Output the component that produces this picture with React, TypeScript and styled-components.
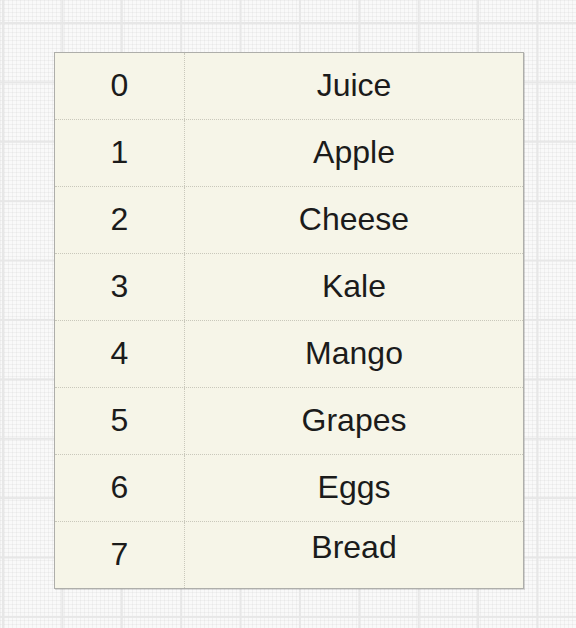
import React from "react";
import styled, { createGlobalStyle } from "styled-components";

const GlobalStyle = createGlobalStyle`
  html, body {
    margin: 0;
    padding: 0;
  }
  body {
    font-family: "Liberation Sans", Arial, sans-serif;
  }
`;

const Canvas = styled.div`
  width: 576px;
  height: 628px;
  box-sizing: border-box;
  padding: 52px 0 0 54px;
  background-color: #f9f9f9;
  background-image:
    linear-gradient(to right, #e7e7e7 0 2px, transparent 2px),
    linear-gradient(to bottom, #e7e7e7 0 2px, transparent 2px),
    linear-gradient(to right, rgba(0, 0, 0, 0.035) 0 1px, transparent 1px),
    linear-gradient(to bottom, rgba(0, 0, 0, 0.035) 0 1px, transparent 1px);
  background-size: 59.4px 59.4px, 59.4px 59.4px, 4px 4px, 4px 4px;
  background-position: 2px 22px, 2px 22px, 0 0, 0 0;
  overflow: hidden;
`;

const Table = styled.div`
  width: 470px;
  box-sizing: border-box;
  border: 1px solid #aeaeaa;
  box-shadow: 1px 1px 0 rgba(0, 0, 0, 0.12);
  background: #f6f5e8;
  display: flex;
  flex-direction: column;
`;

const Row = styled.div<{ $last?: boolean }>`
  display: grid;
  grid-template-columns: 130px 1fr;
  height: ${(p) => (p.$last ? "66px" : "67px")};
  box-sizing: border-box;
  border-bottom: ${(p) => (p.$last ? "none" : "1px dotted #c9c8bb")};
`;

const Cell = styled.div<{ $divider?: boolean; $lift?: number }>`
  display: flex;
  align-items: center;
  justify-content: center;
  box-sizing: border-box;
  border-right: ${(p) => (p.$divider ? "1px dotted #c9c8bb" : "none")};
  padding-bottom: ${(p) => (p.$lift ? `${p.$lift}px` : "2px")};
  font-size: 32px;
  color: #1b1b1b;
  line-height: 1;
`;

const items = ["Juice", "Apple", "Cheese", "Kale", "Mango", "Grapes", "Eggs", "Bread"];

export default function App() {
  return (
    <>
      <GlobalStyle />
      <Canvas>
        <Table>
          {items.map((name, i) => {
            const last = i === items.length - 1;
            return (
              <Row key={name} $last={last}>
                <Cell $divider>{i}</Cell>
                <Cell $lift={last ? 16 : undefined}>{name}</Cell>
              </Row>
            );
          })}
        </Table>
      </Canvas>
    </>
  );
}
